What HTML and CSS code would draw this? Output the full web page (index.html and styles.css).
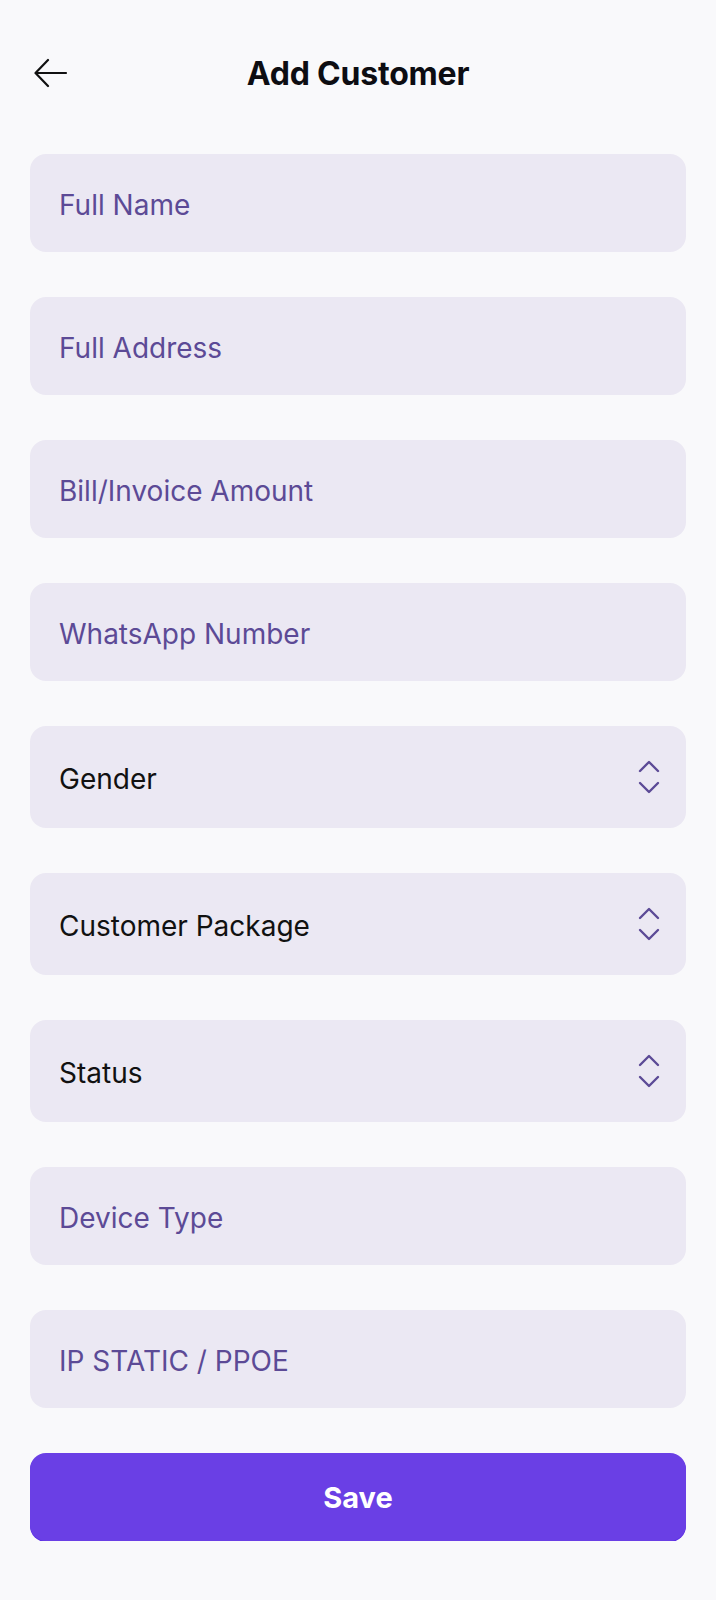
FILE: index.html
```html
<!DOCTYPE html>
<html lang="en">
<head>
<meta charset="utf-8">
<meta name="viewport" content="width=716">
<title>Add Customer</title>
<link rel="stylesheet" href="styles.css">
</head>
<body>
<div class="page">
  <header class="topbar">
    <div class="back">
      <svg width="34" height="30" viewBox="0 0 34 30" fill="none" stroke="#111" stroke-width="2.2" stroke-linecap="round" stroke-linejoin="round">
        <path d="M32 15 H2"/>
        <path d="M14 2 L1.5 15 L14 28"/>
      </svg>
    </div>
    <h1 class="title">Add Customer</h1>
    <div class="spacer"></div>
  </header>

  <form class="form">
    <input class="field" type="text" placeholder="Full Name">
    <input class="field" type="text" placeholder="Full Address">
    <input class="field" type="text" placeholder="Bill/Invoice Amount">
    <input class="field" type="text" placeholder="WhatsApp Number">

    <div class="select">
      <span class="select-label">Gender</span>
      <svg class="chev" width="22" height="38" viewBox="0 0 22 38" fill="none" stroke="#5c4a96" stroke-width="2.4" stroke-linecap="round" stroke-linejoin="round">
        <path d="M2 13 L11 4 L20 13"/>
        <path d="M2 25 L11 34 L20 25"/>
      </svg>
    </div>
    <div class="select">
      <span class="select-label">Customer Package</span>
      <svg class="chev" width="22" height="38" viewBox="0 0 22 38" fill="none" stroke="#5c4a96" stroke-width="2.4" stroke-linecap="round" stroke-linejoin="round">
        <path d="M2 13 L11 4 L20 13"/>
        <path d="M2 25 L11 34 L20 25"/>
      </svg>
    </div>
    <div class="select">
      <span class="select-label">Status</span>
      <svg class="chev" width="22" height="38" viewBox="0 0 22 38" fill="none" stroke="#5c4a96" stroke-width="2.4" stroke-linecap="round" stroke-linejoin="round">
        <path d="M2 13 L11 4 L20 13"/>
        <path d="M2 25 L11 34 L20 25"/>
      </svg>
    </div>

    <input class="field" type="text" placeholder="Device Type">
    <input class="field" type="text" placeholder="IP STATIC / PPOE">

    <button class="save" type="button">Save</button>
  </form>
</div>
</body>
</html>
```

FILE: styles.css
```css
* {
  box-sizing: border-box;
}

html, body {
  margin: 0;
  padding: 0;
  background: #f9f9fb;
}

body {
  font-family: Inter, "Noto Sans", "Liberation Sans", sans-serif;
  color: #111111;
}

.page {
  padding: 0 30px;
}

.topbar {
  height: 146px;
  display: grid;
  grid-template-columns: 1fr auto 1fr;
  align-items: center;
}

.back {
  padding-left: 4px;
  display: flex;
  align-items: center;
}

.back svg {
  display: block;
}

.title {
  margin: 0;
  font-size: 32px;
  font-weight: 700;
  letter-spacing: -0.2px;
  color: #0d0d12;
}

.form {
  display: flex;
  flex-direction: column;
  gap: 45px;
  padding-top: 8px;
}

.field {
  display: block;
  width: 100%;
  height: 98px;
  border: none;
  outline: none;
  border-radius: 16px;
  background: #ebe8f3;
  padding: 3px 29px 0;
  font-family: inherit;
  font-size: 28px;
  color: #111111;
}

.field::placeholder {
  color: #5c4a96;
  opacity: 1;
}

.select {
  height: 102px;
  border-radius: 16px;
  background: #ebe8f3;
  padding: 0 26px 0 29px;
  display: flex;
  align-items: center;
  justify-content: space-between;
}

.select-label {
  font-size: 28px;
  color: #111111;
  padding-top: 3px;
}

.chev {
  display: block;
}

.save {
  height: 88px;
  width: 100%;
  border: none;
  border-radius: 16px;
  background: #6a3fe5;
  box-shadow: 0 1px 0 #5a2be6;
  color: #ffffff;
  font-family: inherit;
  font-size: 29px;
  font-weight: 700;
}
```
